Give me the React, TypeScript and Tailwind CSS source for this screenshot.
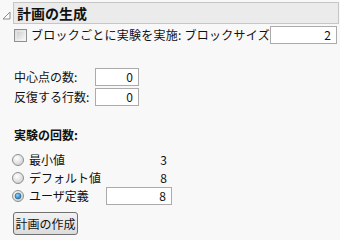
import React from "react";

const font = { fontFamily: '"Noto Sans CJK JP", "Noto Sans", sans-serif' };

function NumBox({ value, w }: { value: string; w: string }) {
  return (
    <div
      className={`${w} h-[18px] bg-white border border-[#ababab] flex items-center justify-end pr-[5px] text-[12px] leading-none text-[#111]`}
    >
      {value}
    </div>
  );
}

function Radio({ checked }: { checked?: boolean }) {
  return (
    <svg width="12" height="12" viewBox="0 0 12 12" className="shrink-0">
      <defs>
        <radialGradient id="rg" cx="40%" cy="35%" r="70%">
          <stop offset="0%" stopColor="#ffffff" />
          <stop offset="100%" stopColor="#cfcfcf" />
        </radialGradient>
        <radialGradient id="rb" cx="40%" cy="35%" r="70%">
          <stop offset="0%" stopColor="#8fd3f5" />
          <stop offset="100%" stopColor="#1f6fa8" />
        </radialGradient>
      </defs>
      <circle cx="6" cy="6" r="5.5" fill="url(#rg)" stroke="#8e8f8f" strokeWidth="1" />
      {checked && <circle cx="6" cy="6" r="3" fill="url(#rb)" stroke="#1c5f8f" strokeWidth="0.6" />}
    </svg>
  );
}

export default function App() {
  return (
    <div className="w-[340px] h-[240px] bg-[#f8f8f8] text-[#111] overflow-hidden" style={font}>
      <div className="flex items-center pt-[2px]">
        <div className="w-[13px] flex items-center justify-center">
          <svg width="9" height="9" viewBox="0 0 9 9" className="mt-[4px]">
            <path d="M8 1 L8 8 L1 8 Z" fill="#fdfdfd" stroke="#8a8a8a" strokeWidth="1" />
          </svg>
        </div>
        <div className="flex-1 h-[22px] mr-[1px] bg-[#ebebeb] border border-[#c6c6c6] flex items-center pl-[3px]">
          <span className="text-[14px] font-bold leading-none">計画の生成</span>
        </div>
      </div>

      <div className="pl-[14px] pr-[3px]">
        <div className="flex items-center h-[18px] mt-[2px]">
          <div className="w-[13px] h-[13px] border border-[#8e8f8f] bg-gradient-to-br from-[#dcdcdc] to-[#f7f7f7] p-[2px] shrink-0">
            <div className="w-full h-full bg-gradient-to-br from-[#d0d0d0] to-[#f2f2f2]" />
          </div>
          <span className="ml-[4px] text-[12px] leading-none whitespace-nowrap tracking-[0.25px]">ブロックごとに実験を実施: ブロックサイズ</span>
          <div className="ml-auto">
            <NumBox value="2" w="w-[67px]" />
          </div>
        </div>

        <div className="flex items-center h-[18px] mt-[24px]">
          <span className="w-[81px] text-[12px] leading-none">中心点の数:</span>
          <NumBox value="0" w="w-[44px]" />
        </div>
        <div className="flex items-center h-[18px] mt-[2px]">
          <span className="w-[81px] text-[12px] leading-none">反復する行数:</span>
          <NumBox value="0" w="w-[44px]" />
        </div>

        <div className="mt-[21px] h-[16px] flex items-center text-[12px] font-bold leading-none">実験の回数:</div>
      </div>

      <div className="pl-[12px] mt-[8px]">
        <div className="flex items-center h-[18px]">
          <div className="w-[94px] flex items-center gap-[5px]">
            <Radio />
            <span className="text-[12px] leading-none">最小値</span>
          </div>
          <div className="w-[66px] text-right pr-[5px] text-[12px] leading-none">3</div>
        </div>
        <div className="flex items-center h-[18px]">
          <div className="w-[94px] flex items-center gap-[5px]">
            <Radio />
            <span className="text-[12px] leading-none whitespace-nowrap">デフォルト値</span>
          </div>
          <div className="w-[66px] text-right pr-[5px] text-[12px] leading-none">8</div>
        </div>
        <div className="flex items-center h-[18px]">
          <div className="w-[94px] flex items-center gap-[5px]">
            <Radio checked />
            <span className="text-[12px] leading-none">ユーザ定義</span>
          </div>
          <NumBox value="8" w="w-[66px]" />
        </div>
      </div>

      <div className="pl-[13px] mt-[7px]">
        <div className="w-[65px] h-[23px] rounded-[3px] border border-[#707070] bg-gradient-to-b from-[#f2f2f2] to-[#dcdcdc] flex items-center justify-center text-[12px] leading-none">
          計画の作成
        </div>
      </div>
    </div>
  );
}
